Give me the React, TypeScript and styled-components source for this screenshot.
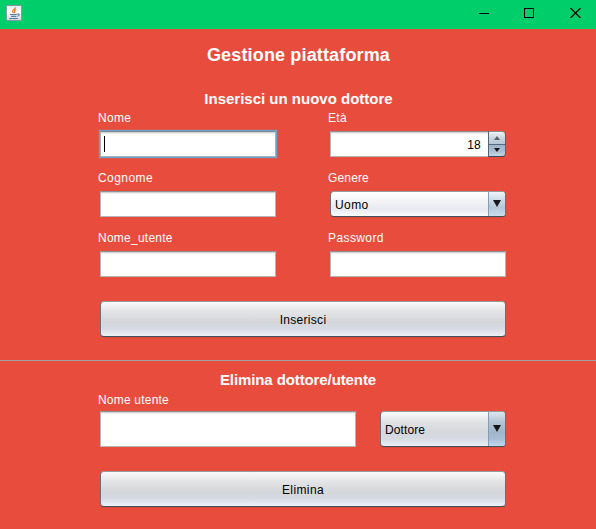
import React from 'react';
import styled, { createGlobalStyle, css } from 'styled-components';

const GlobalStyle = createGlobalStyle`
  * { box-sizing: border-box; }
  body { margin: 0; overflow: hidden; }
  button, input { font: inherit; }
`;

const Window = styled.main`
  width: 596px;
  height: 529px;
  display: flex;
  flex-direction: column;
  background: #e84c3d;
  color: #fff;
  font-family: 'Liberation Sans', Arial, sans-serif;
  font-size: 12px;
`;

const TitleBar = styled.header`
  height: 29px;
  flex: none;
  display: flex;
  justify-content: space-between;
  padding: 5px 15px 0 6px;
  background: #00ce6b;
`;

const WindowControls = styled.div`
  display: flex;
  gap: 35px;
  padding-top: 3px;
  height: 13px;
`;

const Heading = styled.div<{ $top: number; $left?: number }>`
  flex: none;
  padding-top: ${p => p.$top}px;
  padding-left: ${p => p.$left ?? 0}px;
  text-align: center;
`;

const Section = styled.section<{ $top: number }>`
  flex: none;
  display: flex;
  flex-direction: column;
  align-items: center;
  padding: ${p => p.$top}px 90px 0 100px;
`;

const Title = styled.h1`
  margin: 0 0 22px;
  height: 24px;
  font-size: 18px;
  line-height: 24px;
  letter-spacing: 0.15px;
`;

const Subtitle = styled.h2<{ $spacing?: number }>`
  margin: 0;
  height: 20px;
  font-size: 15px;
  line-height: 20px;
  letter-spacing: ${p => p.$spacing ?? 0}px;
`;

const FormGrid = styled.div`
  width: 406px;
  display: grid;
  grid-template-columns: 176px 176px;
  column-gap: 54px;
  row-gap: 14px;
`;

const Field = styled.label`
  display: flex;
  flex-direction: column;
`;

const LabelText = styled.span<{ $spacing: number; $drop?: number }>`
  height: 20px;
  padding-top: ${p => p.$drop ?? 0}px;
  margin-left: -2px;
  font-size: 12px;
  line-height: 14px;
  letter-spacing: ${p => p.$spacing}px;
  white-space: nowrap;
`;

const inputSurface = css`
  border: 1px solid #b5b5b5;
  border-top-color: #8f9091;
  background: linear-gradient(#d2d3d4 0, #d2d3d4 1px, #f1f1f1 1px, #f1f1f1 2px, #fff 2px);
`;

const TextBox = styled.input<{ $height?: number }>`
  ${inputSurface}
  display: block;
  width: 100%;
  height: ${p => p.$height ?? 26}px;
  padding: 0 5px;
  border-radius: 0;
  outline: none;
`;

const FocusedBox = styled.span`
  ${inputSurface}
  display: flex;
  align-items: center;
  height: 26px;
  padding-left: 3px;
  border-color: #a1b2c3;
  border-top-color: #7b8b9a;
  box-shadow: 0 0 0 1px #739fc7, 0 0 0 2px #b66f6d80;
`;

const Caret = styled.i`
  width: 1px;
  height: 16px;
  background: #000;
`;

const Spinner = styled.span`
  display: flex;
  height: 26px;
`;

const SpinnerValue = styled.span`
  ${inputSurface}
  flex: 1;
  border-right: 0;
  padding-right: 7px;
  color: #000;
  line-height: 26px;
  text-align: right;
  font-size: 12px;
  letter-spacing: 0.2px;
`;

const StepButtons = styled.span`
  width: 18px;
  display: flex;
  flex-direction: column;
  border: 1px solid #526372;
  border-top-color: #858e98;
  border-bottom-color: #34495b;
  border-radius: 0 4px 4px 0;
  overflow: hidden;
`;

const Step = styled.span<{ $lower?: boolean }>`
  flex: 1;
  display: grid;
  place-items: center;
  background: ${p => p.$lower
    ? 'linear-gradient(#9fb4c8, #a9bed1 55%, #c4d9eb)'
    : 'linear-gradient(#eef1f4, #c7d2dc 55%, #b7c7d6)'};
  border-top: ${p => (p.$lower ? '1px solid #566b80' : '0')};
`;

const bevel = css`
  border: 1px solid #66717d;
  border-top-color: #969ba0;
  border-bottom-color: #444f5c;
  border-radius: 4px;
  box-shadow: 0 1px 0 #d8493b;
`;

const Combo = styled.span<{ $height: number; $light?: boolean }>`
  ${bevel}
  display: flex;
  width: 100%;
  height: ${p => p.$height}px;
  overflow: hidden;
  color: #000;
  background: ${p => p.$light
    ? 'linear-gradient(#fff, #f4f4f6 35%, #e8e9ef 72%, #fafafd)'
    : 'linear-gradient(#fafafb, #e1e2e4 30%, #d5d7db 57%, #d5d9e2 77%, #ebeef6)'};
`;

const ComboValue = styled.span<{ $spacing: number }>`
  flex: 1;
  display: flex;
  align-items: center;
  padding: 1px 0 0 4px;
  letter-spacing: ${p => p.$spacing}px;
`;

const ComboArrow = styled.span<{ $light?: boolean }>`
  width: 17px;
  display: grid;
  place-items: center;
  padding-bottom: 1px;
  border-left: 1px solid #859cb1;
  background: ${p => p.$light
    ? 'linear-gradient(#eef4f9, #cbd9e5 35%, #b5c8d9 65%, #cadded)'
    : 'linear-gradient(#dce5ed, #b3c4d3 30%, #a1b5ca 60%, #a6bdd3 78%, #c1d7eb)'};
`;

const PushButton = styled.button<{ $spacing: number }>`
  ${bevel}
  width: 406px;
  height: 36px;
  margin-top: 24px;
  padding: 2px 0 0;
  color: #000;
  background: linear-gradient(#fafafb, #e3e4e5 28%, #d5d7da 57%, #d5d9e2 77%, #eff1f8);
  letter-spacing: ${p => p.$spacing}px;
`;

const Divider = styled.hr`
  flex: none;
  width: 100%;
  height: 1px;
  margin: 23px 0 0;
  border: 0;
  background: #a0a3a6;
`;

const DeleteRow = styled.div`
  width: 406px;
  display: grid;
  grid-template-columns: 256px 126px;
  column-gap: 24px;
  align-items: end;
`;

const Drawing = styled.svg`
  display: block;
`;

const JavaIcon = () => (
  <Drawing width="16" height="16" viewBox="0 0 16 16">
    <defs>
      <linearGradient id="tile" x2="0" y2="1">
        <stop stopColor="#e4e9ed" />
        <stop offset=".45" stopColor="#fff" />
        <stop offset="1" stopColor="#cbd3da" />
      </linearGradient>
    </defs>
    <rect x=".5" y=".5" width="15" height="15" rx="1" fill="url(#tile)" stroke="#8799a6" />
    <path d="M9.6 2.4c.2 1.5-3.5 2.2-3 3.9.1.7.9 1.1 1.1 1.9M10.2 4.7c-1.5.5-2 1-1.4 1.8.3.5.1 1-.5 1.4" fill="none" stroke="#ed8024" strokeWidth="1.3" />
    <path d="M4 9.5h7M5 11.4h5.4M3.2 13.5h8.6M11.2 9.1c2.8-.7 2.4 1.7.2 2.2" fill="none" stroke="#557d9f" strokeWidth="1.1" />
  </Drawing>
);

const Arrow = ({ up = false, large = false }: { up?: boolean; large?: boolean }) => (
  <Drawing width={large ? 8 : 6} height={large ? 7 : 4} viewBox="0 0 7 7" preserveAspectRatio="none">
    <path d={up ? 'M0 7L3.5 0 7 7Z' : 'M0 0H7L3.5 7Z'} fill={up ? '#5c6268' : '#14181c'} />
  </Drawing>
);

const MinimizeIcon = () => (
  <Drawing width="10" height="10"><path d="M0 5.5h10" stroke="#000" /></Drawing>
);
const MaximizeIcon = () => (
  <Drawing width="11" height="10"><rect x=".5" y=".5" width="9" height="9" fill="none" stroke="#000" /></Drawing>
);
const CloseIcon = () => (
  <Drawing width="11" height="10"><path d="M.5 0l10 10M10.5 0l-10 10" stroke="#000" strokeWidth="1.2" /></Drawing>
);

export default function App() {
  return (
    <>
      <GlobalStyle />
      <Window>
        <TitleBar>
          <JavaIcon />
          <WindowControls><MinimizeIcon /><MaximizeIcon /><CloseIcon /></WindowControls>
        </TitleBar>
        <Heading $top={14} $left={1}>
          <Title>Gestione piattaforma</Title>
          <Subtitle>Inserisci un nuovo dottore</Subtitle>
        </Heading>
        <Section $top={2}>
          <FormGrid>
            <Field>
              <LabelText $spacing={0.3}>Nome</LabelText>
              <FocusedBox><Caret /></FocusedBox>
            </Field>
            <Field>
              <LabelText $spacing={0.3}>Età</LabelText>
              <Spinner>
                <SpinnerValue>18</SpinnerValue>
                <StepButtons>
                  <Step><Arrow up /></Step>
                  <Step $lower><Arrow /></Step>
                </StepButtons>
              </Spinner>
            </Field>
            <Field>
              <LabelText $spacing={0.45}>Cognome</LabelText>
              <TextBox />
            </Field>
            <Field>
              <LabelText $spacing={0.15}>Genere</LabelText>
              <Combo $height={26} $light>
                <ComboValue $spacing={0.4}>Uomo</ComboValue>
                <ComboArrow $light><Arrow large /></ComboArrow>
              </Combo>
            </Field>
            <Field>
              <LabelText $spacing={0.25}>Nome_utente</LabelText>
              <TextBox />
            </Field>
            <Field>
              <LabelText $spacing={0.4}>Password</LabelText>
              <TextBox type="password" />
            </Field>
          </FormGrid>
          <PushButton $spacing={0.3}>Inserisci</PushButton>
        </Section>
        <Divider />
        <Heading $top={9}>
          <Subtitle $spacing={-0.1}>Elimina dottore/utente</Subtitle>
        </Heading>
        <Section $top={1}>
          <DeleteRow>
            <Field>
              <LabelText $spacing={0.2} $drop={2}>Nome utente</LabelText>
              <TextBox $height={36} />
            </Field>
            <Combo $height={36}>
              <ComboValue $spacing={0.1}>Dottore</ComboValue>
              <ComboArrow><Arrow large /></ComboArrow>
            </Combo>
          </DeleteRow>
          <PushButton $spacing={0.4}>Elimina</PushButton>
        </Section>
      </Window>
    </>
  );
}
